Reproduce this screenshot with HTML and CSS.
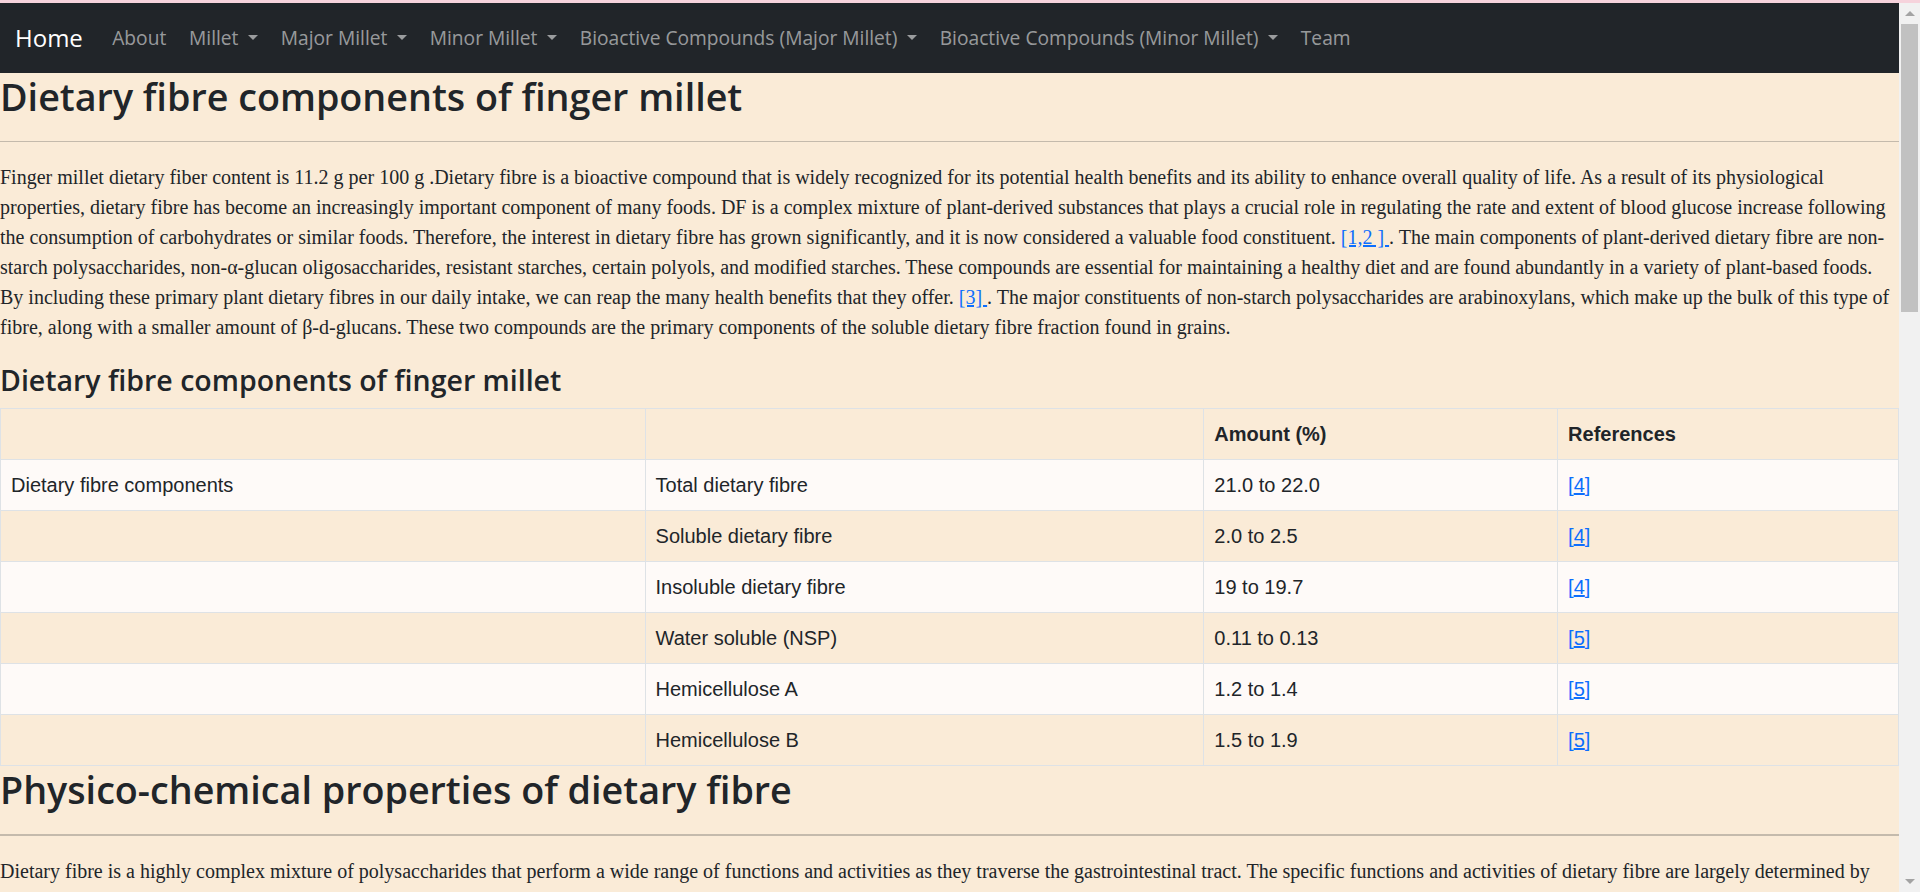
FILE: index.html
```html
<!DOCTYPE html>
<html lang="en">
<head>
<meta charset="utf-8">
<title>Dietary fibre components of finger millet</title>
<link rel="stylesheet" href="styles.css">
</head>
<body>
<div class="topline"></div>
<div class="page">
<nav class="navbar">
  <a class="brand" href="#">Home</a>
  <ul class="nav">
    <li><a class="nav-link" href="#">About</a></li>
    <li><a class="nav-link dropdown" href="#">Millet</a></li>
    <li><a class="nav-link dropdown" href="#">Major Millet</a></li>
    <li><a class="nav-link dropdown" href="#">Minor Millet</a></li>
    <li><a class="nav-link dropdown" href="#">Bioactive Compounds (Major Millet)</a></li>
    <li><a class="nav-link dropdown" href="#">Bioactive Compounds (Minor Millet)</a></li>
    <li><a class="nav-link" href="#">Team</a></li>
  </ul>
</nav>
<main class="content">
  <h2 class="title">Dietary fibre components of finger millet</h2>
  <hr class="rule">
  <p class="text">Finger millet dietary fiber content is 11.2 g per 100 g .Dietary fibre is a bioactive compound that is widely recognized for its potential health benefits and its ability to enhance overall quality of life. As a result of its physiological properties, dietary fibre has become an increasingly important component of many foods. DF is a complex mixture of plant-derived substances that plays a crucial role in regulating the rate and extent of blood glucose increase following the consumption of carbohydrates or similar foods. Therefore, the interest in dietary fibre has grown significantly, and it is now considered a valuable food constituent. <a href="#">[1,2 ] </a>. The main components of plant-derived dietary fibre are non-starch polysaccharides, non-α-glucan oligosaccharides, resistant starches, certain polyols, and modified starches. These compounds are essential for maintaining a healthy diet and are found abundantly in a variety of plant-based foods. By including these primary plant dietary fibres in our daily intake, we can reap the many health benefits that they offer. <a href="#">[3] </a>. The major constituents of non-starch polysaccharides are arabinoxylans, which make up the bulk of this type of fibre, along with a smaller amount of β-d-glucans. These two compounds are the primary components of the soluble dietary fibre fraction found in grains.</p>

  <h4 class="subtitle">Dietary fibre components of finger millet</h4>
  <table class="data">
    <colgroup>
      <col class="c1"><col class="c2"><col class="c3"><col class="c4">
    </colgroup>
    <thead>
      <tr><th></th><th></th><th>Amount (%)</th><th>References</th></tr>
    </thead>
    <tbody>
      <tr><td>Dietary fibre components</td><td>Total dietary fibre</td><td>21.0 to 22.0</td><td><span class="ref">[<a href="#">4</a>]</span></td></tr>
      <tr><td></td><td>Soluble dietary fibre</td><td>2.0 to 2.5</td><td><span class="ref">[<a href="#">4</a>]</span></td></tr>
      <tr><td></td><td>Insoluble dietary fibre</td><td>19 to 19.7</td><td><span class="ref">[<a href="#">4</a>]</span></td></tr>
      <tr><td></td><td>Water soluble (NSP)</td><td>0.11 to 0.13</td><td><span class="ref">[<a href="#">5</a>]</span></td></tr>
      <tr><td></td><td>Hemicellulose A</td><td>1.2 to 1.4</td><td><span class="ref">[<a href="#">5</a>]</span></td></tr>
      <tr><td></td><td>Hemicellulose B</td><td>1.5 to 1.9</td><td><span class="ref">[<a href="#">5</a>]</span></td></tr>
    </tbody>
  </table>

  <h2 class="title">Physico-chemical properties of dietary fibre</h2>
  <hr class="rule rule-thick">
  <p class="text">Dietary fibre is a highly complex mixture of polysaccharides that perform a wide range of functions and activities as they traverse the gastrointestinal tract. The specific functions and activities of dietary fibre are largely determined by their physico-chemical properties, such as water holding capacity, viscosity, solubility, fermentability and the ability to bind other compounds.</p>
</main>
</div>
<div class="scrollbar" aria-hidden="true">
  <div class="sb-btn"><span class="sb-up"></span></div>
  <div class="sb-track"><div class="sb-thumb"></div></div>
  <div class="sb-btn"><span class="sb-down"></span></div>
</div>
</body>
</html>
```
FILE: styles.css
```css
html {
  background: #faebd7;
}
body {
  margin: 0;
  background: #faebd7;
  color: #212529;
  font-family: "Open Sans", "Noto Sans", sans-serif;
  font-size: 20px;
  line-height: 30px;
}
.topline {
  height: 3px;
  background: #f6d3dc;
}
.page {
  margin-right: 21px;
}
.navbar {
  display: flex;
  align-items: center;
  height: 70px;
  padding: 0 15px;
  background: #212529;
}
.brand {
  color: #fff;
  text-decoration: none;
  font-size: 24px;
  margin-right: 18px;
}
.nav {
  display: flex;
  list-style: none;
  margin: 0;
  padding: 0;
}
.nav-link {
  display: block;
  padding: 0 11.4px;
  color: rgba(255, 255, 255, 0.55);
  text-decoration: none;
  font-size: 19.2px;
}
.dropdown::after {
  content: "";
  display: inline-block;
  margin-left: 0.5em;
  vertical-align: 0.255em;
  border-top: 0.3em solid;
  border-right: 0.3em solid transparent;
  border-left: 0.3em solid transparent;
  border-bottom: 0;
}
.content {
  padding: 0;
}
.title {
  font-size: 37.7px;
  line-height: 48px;
  font-weight: 600;
  margin: 0 0 10px;
}
.subtitle {
  font-size: 28.5px;
  line-height: 36px;
  font-weight: 600;
  margin: 0 0 10px;
}
.rule {
  border: 0;
  border-top: 1px solid #c4baac;
  margin: 20px 0;
}
.rule-thick {
  border-top-width: 2px;
}
.text {
  font-family: "Liberation Serif", "Times New Roman", serif;
  font-size: 20px;
  line-height: 30px;
  margin: 0 0 20px;
}
.text a,
.ref,
.ref a {
  color: #0d6efd;
}
.ref a {
  text-decoration: underline;
}
.data {
  width: 100%;
  table-layout: fixed;
  border-collapse: collapse;
  font-family: "Liberation Sans", Arial, sans-serif;
  font-size: 20px;
  line-height: 30px;
  margin: 0;
}
.c1 { width: 33.96%; }
.c2 { width: 29.44%; }
.c3 { width: 18.64%; }
.c4 { width: 17.96%; }
.data th,
.data td {
  border: 1px solid #dee2e6;
  padding: 10px;
  text-align: left;
  vertical-align: top;
}
.data th {
  font-weight: bold;
}
.data tbody tr:nth-child(odd) {
  background: #fefaf8;
}
.scrollbar {
  position: fixed;
  top: 3px;
  right: 0;
  bottom: 0;
  width: 21px;
  background: #f1f1f1;
  display: flex;
  flex-direction: column;
}
.sb-btn {
  height: 21px;
  display: flex;
  align-items: center;
  justify-content: center;
}
.sb-up {
  width: 0;
  height: 0;
  border-left: 5px solid transparent;
  border-right: 5px solid transparent;
  border-bottom: 5px solid #a3a3a3;
}
.sb-down {
  width: 0;
  height: 0;
  border-left: 5px solid transparent;
  border-right: 5px solid transparent;
  border-top: 5px solid #a3a3a3;
}
.sb-track {
  flex: 1;
  padding: 0 2px;
}
.sb-thumb {
  height: 288px;
  background: #c1c1c1;
}
```
